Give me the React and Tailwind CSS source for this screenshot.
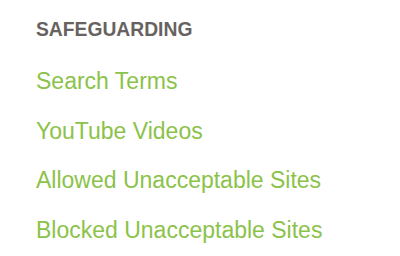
export default function App() {
  const links = [
    "Search Terms",
    "YouTube Videos",
    "Allowed Unacceptable Sites",
    "Blocked Unacceptable Sites",
  ];

  return (
    <div className="w-[400px] h-[256px] bg-white font-['Liberation_Sans',Arial,sans-serif] pl-[36px] pt-[18px]">
      <h2 className="text-[19.3px] leading-[24px] font-bold text-[#676260]">SAFEGUARDING</h2>
      <ul className="mt-[26px] flex flex-col gap-[21.5px]">
        {links.map((label) => (
          <li key={label}>
            <a href="#" className="text-[23px] leading-[26px] text-[#8bc24a]">
              {label}
            </a>
          </li>
        ))}
      </ul>
    </div>
  );
}
